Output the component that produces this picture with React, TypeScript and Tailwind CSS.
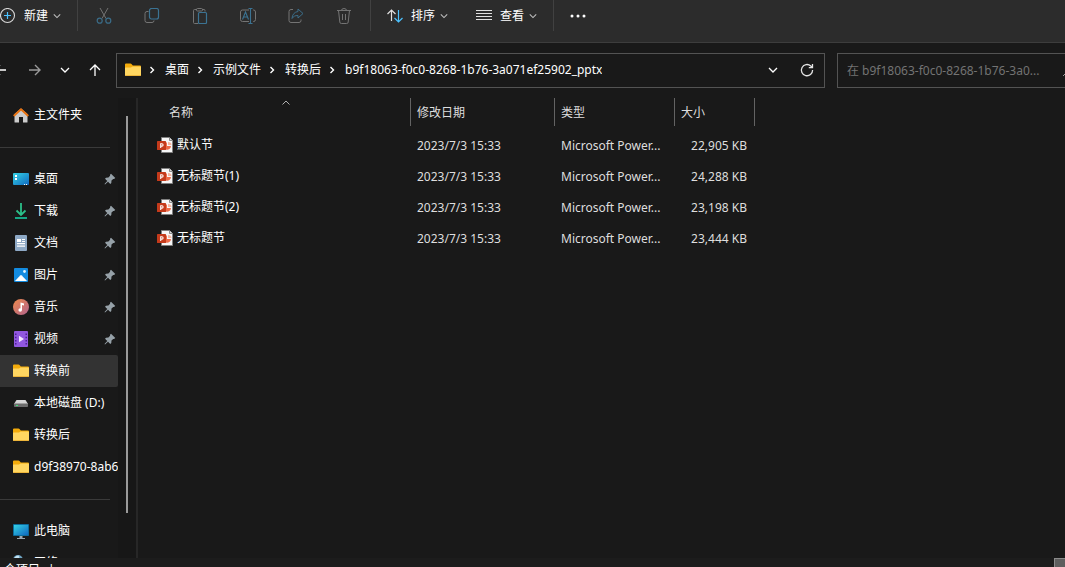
import React from "react";

type IconProps = { className?: string };

const ChevronDown = ({ className = "" }: IconProps) => (
  <svg viewBox="0 0 10 10" className={`shrink-0 ${className}`} fill="none" stroke="currentColor" strokeWidth="1.3">
    <path d="M1 3l4 4 4-4" />
  </svg>
);

const PlusCircle = () => (
  <svg viewBox="0 0 16 16" className="size-4 shrink-0" fill="none">
    <circle cx="7.5" cy="7.5" r="7" stroke="#d8d8d8" strokeWidth="1.1" />
    <path d="M7.5 4v7M4 7.5h7" stroke="#4cc2ff" strokeWidth="1.2" />
  </svg>
);

const CutIcon = () => (
  <svg viewBox="0 0 16 16" className="size-4" fill="none">
    <path d="M4 0l6 10.500M12 0L6 10.500" stroke="#747474" />
    <circle cx="3.700" cy="12.700" r="2.500" stroke="#3b6d89" strokeWidth="1.200" />
    <circle cx="12.300" cy="12.700" r="2.500" stroke="#3b6d89" strokeWidth="1.200" />
  </svg>
);

const CopyIcon = () => (
  <svg viewBox="0 0 16 16" className="size-4" fill="none">
    <path d="M4.500 3.500H3a2 2 0 0 0-2 2v7a2 2 0 0 0 2 2h5a2 2 0 0 0 2-2" stroke="#747474" />
    <rect x="5.500" y=".5" width="9" height="10.500" rx="2" stroke="#3b7393" strokeWidth="1.200" />
  </svg>
);

const PasteIcon = () => (
  <svg viewBox="0 0 16 16" className="size-4" fill="none">
    <path d="M5 1.500H2.500a1 1 0 0 0-1 1v12a1 1 0 0 0 1 1H6M10 1.500h2a1 1 0 0 1 1 1v1" stroke="#747474" />
    <rect x="4.500" y="0.500" width="6" height="2.500" rx="1" stroke="#747474" />
    <rect x="6.500" y="4.500" width="8" height="11" rx="1" stroke="#3b7393" strokeWidth="1.200" />
  </svg>
);

const RenameIcon = () => (
  <svg viewBox="0 0 16 16" className="size-4" fill="none">
    <path d="M9 2H2.500a2 2 0 0 0-2 2v7.500a2 2 0 0 0 2 2H9M13 2h.500a2 2 0 0 1 2 2v7.500a2 2 0 0 1-2 2H13" stroke="#747474" />
    <path d="M2.500 11.500l3-7.500 3 7.500M3.500 9h4M10.500 .5v15M8.500 .5h4M8.500 15.500h4" stroke="#3b7393" strokeWidth="1.100" />
  </svg>
);

const ShareIcon = () => (
  <svg viewBox="0 0 16 16" className="size-4" fill="none">
    <path d="M5 1.500H3a2 2 0 0 0-2 2v9a2 2 0 0 0 2 2h8a2 2 0 0 0 2-2v-1" stroke="#747474" />
    <path d="M10 1l5 4.500-5 4.500V7.500c-3 0-4.500.8-6 3 .2-4 2.500-6.500 6-7z" stroke="#3b6d89" />
  </svg>
);

const TrashIcon = () => (
  <svg viewBox="0 0 16 16" className="size-4" fill="none" stroke="#747474">
    <path d="M1 2.500h14M5.500 2.500a2.500 2 0 0 1 5 0M2.500 2.500l1.300 11.500a1.500 1.500 0 0 0 1.500 1.500h5.400a1.500 1.500 0 0 0 1.500-1.500l1.300-11.500M6.500 6v6M9.500 6v6" />
  </svg>
);

const SortIcon = () => (
  <svg viewBox="0 0 16 16" className="size-4" fill="none" strokeWidth="1.200">
    <path d="M4.500 13V2M.5 6l4-4 4 4" stroke="#e0e0e0" />
    <path d="M11.500 2v11.500M7.500 10l4 4 4-4" stroke="#4cc2ff" />
  </svg>
);

const ListIcon = () => (
  <svg viewBox="0 0 16 16" className="size-4" stroke="#e0e0e0">
    <path d="M0 2.500h16M0 5.500h16M0 8.500h16M0 11.500h16" />
  </svg>
);

const DotsIcon = () => (
  <svg viewBox="0 0 18 6" className="h-1.5 w-[18px]" fill="#fff">
    <circle cx="3" cy="3" r="1.500" />
    <circle cx="9" cy="3" r="1.500" />
    <circle cx="15" cy="3" r="1.500" />
  </svg>
);

const FolderIcon = () => (
  <svg viewBox="0 0 16 16" className="size-4 shrink-0">
    <path d="M0 2.500Q0 1.500 1 1.500h4.500q.6 0 1 .5l1.300 1.500H15q1 0 1 1V8H0z" fill="#f3ab0b" />
    <path d="M0 6q0-.5.500-.5H6l1.500-1H15.500q.5 0 .5.500v8q0 1-1 1H1q-1 0-1-1z" fill="#ffd661" />
    <path d="M0 13q0 1 1 1h14q1 0 1-1z" fill="#edb53a" />
  </svg>
);

const HomeIcon = () => (
  <svg viewBox="0 0 16 16" className="size-4 shrink-0">
    <path d="M1.500 7L8 1.500 14.500 7v8q0 .5-.5.500H10V10H6v5.500H2q-.5 0-.5-.5z" fill="#cbcbcb" />
    <path d="M.7 9L8 2.200 15.300 9" fill="none" stroke="#e8710f" strokeWidth="1.900" strokeLinejoin="round" />
  </svg>
);

const DesktopIcon = () => (
  <svg viewBox="0 0 16 16" className="size-4 shrink-0">
    <defs>
      <linearGradient id="desk" x1="0" y1="0" x2="1" y2="1">
        <stop offset="0" stopColor="#34d2e4" />
        <stop offset="1" stopColor="#1068c0" />
      </linearGradient>
    </defs>
    <rect y="2" width="16" height="12" rx="1" fill="url(#desk)" />
    <path d="M2 4h2v2H2zM2 7h2v2H2zM11 13h1v1h-1zM13 13h1v1h-1z" fill="#fff" />
  </svg>
);

const DownloadIcon = () => (
  <svg viewBox="0 0 16 16" className="size-4 shrink-0" fill="none" strokeWidth="1.800">
    <path d="M8 0v11M3.500 7.500L8 12l4.500-4.500" stroke="#2cc08a" />
    <path d="M2 15h12" stroke="#16a785" />
  </svg>
);

const DocumentIcon = () => (
  <svg viewBox="0 0 16 16" className="size-4 shrink-0">
    <rect x="2" width="12" height="16" rx="1" fill="#8ea9c6" />
    <path d="M4 4h4v3H4zM9 4h3v1H9zM9 6h3v1H9zM4 8h8v1.300H4zM4 10.500h8v1.300H4z" fill="#fff" />
  </svg>
);

const PictureIcon = () => (
  <svg viewBox="0 0 16 16" className="size-4 shrink-0">
    <rect x="1" y="1" width="14" height="14" rx="1" fill="#138be0" />
    <path d="M2 14l5.200-5.500q.8-.8 1.600 0L14 14z" fill="#fff" />
    <circle cx="11.500" cy="4.500" r="1.400" fill="#dff3ff" />
  </svg>
);

const MusicIcon = () => (
  <svg viewBox="0 0 16 16" className="size-4 shrink-0">
    <defs>
      <linearGradient id="music" x1="0" y1="0" x2="1" y2="1">
        <stop offset="0" stopColor="#ef8a4b" />
        <stop offset="1" stopColor="#b0628e" />
      </linearGradient>
    </defs>
    <circle cx="8" cy="8" r="8" fill="url(#music)" />
    <path d="M7.500 3.500L11 4.500v2l-2-.5v5h-1.500z" fill="#fff" />
    <circle cx="7.200" cy="11" r="1.800" fill="#fff" />
  </svg>
);

const VideoIcon = () => (
  <svg viewBox="0 0 16 16" className="size-4 shrink-0">
    <rect x="1" width="14" height="16" rx="1" fill="#9157e0" />
    <path d="M2 2.500h1.500V4H2zM2 5.700h1.500v1.500H2zM2 8.900h1.500v1.500H2zM2 12.100h1.500v1.500H2zM12.500 2.500H14V4h-1.500zM12.500 5.700H14v1.500h-1.500zM12.500 8.900H14v1.500h-1.500zM12.500 12.100H14v1.500h-1.500z" fill="#4b2195" />
    <path d="M6 4.800l5 3.200-5 3.200z" fill="#f1e6ff" />
  </svg>
);

const DriveIcon = () => (
  <svg viewBox="0 0 16 16" className="size-4 shrink-0">
    <path d="M3.500 5h9L15 9H1z" fill="#d6d6d6" />
    <rect x="1" y="8.500" width="14" height="3.500" rx=".8" fill="#6d6d6d" />
    <path d="M3 10h2v1H3z" fill="#3ee07a" />
  </svg>
);

const ComputerIcon = () => (
  <svg viewBox="0 0 16 16" className="size-4 shrink-0">
    <rect y="1" width="16" height="12" rx=".8" fill="#0c6c9c" />
    <rect x="1" y="2" width="14" height="10" fill="url(#desk)" />
    <path d="M6.500 13h3v2h-3zM4 15h8v1H4z" fill="#9aa7b0" />
  </svg>
);

const NetworkIcon = () => (
  <svg viewBox="0 0 16 16" className="size-4 shrink-0">
    <circle cx="5" cy="5" r="5" fill="#6fa5c4" />
    <path d="M1.500 2.500q2-2 4-2l1 2-3 2z" fill="#c5e4f4" />
    <rect x="5" y="7" width="11" height="7" fill="#1e8fd0" />
  </svg>
);

const PinIcon = () => (
  <svg viewBox="0 0 12 12" className="size-3 shrink-0">
    <path d="M7 .8L11.300 5 10 6l-.8-.1L7.500 7.600 7.300 10 6.300 11 4 8.700 1 11.500.5 11l2.800-3L1 5.700l1-1 2.400-.2L6.100 2.800 6 1.800z" fill="#96a1a8" />
  </svg>
);

const PowerPointIcon = () => (
  <svg viewBox="0 0 16 16" className="size-4 shrink-0">
    <path d="M4.500.5h8l3 3v12h-11z" fill="#f6f6f6" stroke="#808080" />
    <path d="M12.500.5v3h3" fill="#ddd" stroke="#707070" strokeWidth=".8" />
    <path d="M11 5v3h3.500a3.500 3 0 0 0-3.500-3z" fill="#f6b5a0" />
    <path d="M9 5.500h1V9h4A3.800 3.800 0 0 1 9 12.500z" fill="#ee6c4a" />
    <rect y="4" width="9" height="9" rx=".6" fill="#c43a1b" />
    <path d="M3.700 11V6.700h1.200a1.100 1.100 0 0 1 0 2.400H3.700" fill="none" stroke="#fff" strokeWidth="1.100" />
  </svg>
);

const fileActions = [
  { label: "剪切", icon: <CutIcon /> },
  { label: "复制", icon: <CopyIcon /> },
  { label: "粘贴", icon: <PasteIcon /> },
  { label: "重命名", icon: <RenameIcon /> },
  { label: "共享", icon: <ShareIcon /> },
  { label: "删除", icon: <TrashIcon /> },
];

const crumbs = ["桌面", "示例文件", "转换后", "b9f18063-f0c0-8268-1b76-3a071ef25902_pptx"];

type Place = { name: string; icon: React.ReactNode; pinned?: boolean; active?: boolean };

const quickAccess: Place[] = [
  { name: "桌面", icon: <DesktopIcon />, pinned: true },
  { name: "下载", icon: <DownloadIcon />, pinned: true },
  { name: "文档", icon: <DocumentIcon />, pinned: true },
  { name: "图片", icon: <PictureIcon />, pinned: true },
  { name: "音乐", icon: <MusicIcon />, pinned: true },
  { name: "视频", icon: <VideoIcon />, pinned: true },
  { name: "转换前", icon: <FolderIcon />, active: true },
  { name: "本地磁盘 (D:)", icon: <DriveIcon /> },
  { name: "转换后", icon: <FolderIcon /> },
  { name: "d9f38970-8ab6", icon: <FolderIcon /> },
];

const files = [
  { name: "默认节", date: "2023/7/3 15:33", size: "22,905 KB" },
  { name: "无标题节(1)", date: "2023/7/3 15:33", size: "24,288 KB" },
  { name: "无标题节(2)", date: "2023/7/3 15:33", size: "23,198 KB" },
  { name: "无标题节", date: "2023/7/3 15:33", size: "23,444 KB" },
];

const Toolbar = () => (
  <header className="flex h-[43px] shrink-0 border-b border-[#3d3d3d] bg-[#2c2c2c] pb-[11px]">
    <button className="flex w-[77px] items-center">
      <PlusCircle />
      <span className="ml-2">新建</span>
      <ChevronDown className="ml-[5px] size-2 text-[#c0c0c0]" />
    </button>
    <div className="mr-0.5 w-px bg-[#414141]"></div>
    {fileActions.map((action) => (
      <button key={action.label} aria-label={action.label} className="flex w-12 items-center justify-center">
        {action.icon}
      </button>
    ))}
    <div className="ml-0.5 w-px bg-[#414141]"></div>
    <button className="ml-4 flex items-center">
      <SortIcon />
      <span className="ml-2">排序</span>
      <ChevronDown className="ml-[5px] size-2 text-[#c0c0c0]" />
    </button>
    <button className="ml-7 flex items-center">
      <ListIcon />
      <span className="ml-2">查看</span>
      <ChevronDown className="ml-[5px] size-2 text-[#c0c0c0]" />
    </button>
    <div className="ml-4 w-px bg-[#414141]"></div>
    <button aria-label="查看更多" className="ml-[15px] flex items-center">
      <DotsIcon />
    </button>
  </header>
);

const AddressRow = () => (
  <div className="flex shrink-0 items-center pt-2.5 pb-2.5">
    <div className="mr-1.5 flex shrink-0 items-center pb-0.5">
      <button aria-label="后退" className="flex w-5 items-center">
        <svg viewBox="6 0 6 12" className="h-3 w-1.5" fill="none" stroke="#fff" strokeWidth="1.400">
          <path d="M6 1L1 6l5 5M1 6h11" />
        </svg>
      </button>
      <button aria-label="前进" className="flex w-[30px] items-center justify-center">
        <svg viewBox="0 0 12 12" className="size-3" fill="none" stroke="#9a9a9a" strokeWidth="1.400">
          <path d="M0 6h11M6 1l5 5-5 5" />
        </svg>
      </button>
      <button aria-label="最近浏览的位置" className="flex w-[30px] items-center justify-center">
        <ChevronDown className="size-2.5 text-white" />
      </button>
      <button aria-label="上移" className="flex w-[30px] items-center justify-center">
        <svg viewBox="0 0 12 12" className="size-3" fill="none" stroke="#fff" strokeWidth="1.300">
          <path d="M6 12V1M1 6l5-5 5 5" />
        </svg>
      </button>
    </div>

    <div className="flex h-[35px] min-w-0 flex-1 items-center border border-[#535353] pr-2.5 pb-0.5 pl-2">
      <FolderIcon />
      {crumbs.map((crumb) => (
        <React.Fragment key={crumb}>
          <svg viewBox="0 0 6 8" className="mr-2.5 ml-2 h-2 w-1.5 shrink-0" fill="none" stroke="#fff" strokeWidth="1.400">
            <path d="M1.500 1l3 3-3 3" />
          </svg>
          <a href="#" className="truncate">{crumb}</a>
        </React.Fragment>
      ))}
      <button aria-label="以前的位置" className="ml-auto">
        <ChevronDown className="size-2.5 text-white" />
      </button>
      <button aria-label="刷新" className="ml-[22px]">
        <svg viewBox="0 0 14 14" className="size-3.5" fill="none" stroke="#e4e4e4" strokeWidth="1.300">
          <path d="M12.600 7A5.600 5.600 0 1 1 10.800 3L12.400 4.500M12.500 1v3.600H8.800" />
        </svg>
      </button>
    </div>

    <div className="ml-3 flex h-[35px] w-[228px] shrink-0 items-center border border-r-0 border-[#535353] pl-[9px]">
      <input
        type="text"
        aria-label="搜索"
        placeholder="在 b9f18063-f0c0-8268-1b76-3a0..."
        className="min-w-0 flex-1 bg-transparent outline-none placeholder:text-[#737373]"
      />
      <svg viewBox="0 0 2 12" className="h-3 w-0.5 shrink-0" stroke="#9a9a9a">
        <path d="M0 11l2-2" />
      </svg>
    </div>
  </div>
);

const PlaceRow = ({ name, icon, pinned, active }: Place) => (
  <a
    href="#"
    className={`flex h-8 shrink-0 items-center overflow-hidden rounded-r-xs pl-[13px] whitespace-nowrap ${active ? "bg-[#333333]" : ""}`}
  >
    {icon}
    <span className="ml-[5px]">{name}</span>
    {pinned && (
      <span className="mr-0.5 ml-auto">
        <PinIcon />
      </span>
    )}
  </a>
);

const Divider = () => (
  <div className="mr-2 flex h-8 shrink-0 items-center">
    <hr className="w-full border-[#3a3a3a]" />
  </div>
);

const Sidebar = () => (
  <aside className="flex w-[138px] shrink-0 border-r-2 border-[#272727] bg-[#171717]">
    <nav className="flex w-[118px] flex-col overflow-hidden bg-[#191919] pt-px">
      <PlaceRow name="主文件夹" icon={<HomeIcon />} />
      <Divider />
      {quickAccess.map((place) => (
        <PlaceRow key={place.name} {...place} />
      ))}
      <Divider />
      <PlaceRow name="此电脑" icon={<ComputerIcon />} />
      <PlaceRow name="网络" icon={<NetworkIcon />} />
    </nav>
    <div className="mt-[18px] mb-[45px] ml-2 w-0.5 bg-[#9a9a9a]"></div>
  </aside>
);

const FileTable = () => (
  <main className="min-w-0 flex-1 pl-[15px]">
    <table className="w-[602px] table-fixed text-left text-[#dedede]">
      <thead>
        <tr className="h-8 align-top leading-[30px]">
          <th className="relative w-[258px] p-0 font-normal">
            <div className="h-7 border-r border-[#636363] pl-4">名称</div>
            <svg viewBox="0 0 8 5" className="absolute top-0.5 left-[129px] h-[5px] w-2" fill="none" stroke="#b0b0b0">
              <path d="M.5 4.500L4 1l3.500 3.500" />
            </svg>
          </th>
          <th className="w-36 p-0 font-normal">
            <div className="h-7 border-r border-[#636363] pl-1.5">修改日期</div>
          </th>
          <th className="w-[120px] p-0 font-normal">
            <div className="h-7 border-r border-[#636363] pl-1.5">类型</div>
          </th>
          <th className="w-20 p-0 font-normal">
            <div className="h-7 border-r border-[#636363] pl-1.5">大小</div>
          </th>
        </tr>
      </thead>
      <tbody>
        {files.map((file) => (
          <tr key={file.name} className="h-[31px]">
            <td className="p-0 pl-1 text-white">
              <div className="flex items-center gap-1 pb-px">
                <PowerPointIcon />
                {file.name}
              </div>
            </td>
            <td className="p-0 pl-1.5">{file.date}</td>
            <td className="p-0 pl-1.5 whitespace-nowrap">Microsoft Power...</td>
            <td className="p-0 pr-2 text-right">{file.size}</td>
          </tr>
        ))}
      </tbody>
    </table>
  </main>
);

const StatusBar = () => (
  <footer className="flex h-[9px] shrink-0 items-start overflow-hidden bg-[#1c1c1c] pl-1 leading-6">
    <span>个项目</span>
    <span className="ml-2">|</span>
    <button aria-label="详细信息" className="ml-auto h-5 w-[11px] border-t border-l border-[#8a8a8a] bg-[#5e5e5e] pt-[3px] pl-[3px]">
      <svg viewBox="0 0 7 7" className="size-[7px]">
        <path d="M0 0h7v7H0z" fill="#d5d5d5" />
        <path d="M2 3h5v1H2z" fill="#111" />
      </svg>
    </button>
  </footer>
);

const App: React.FC = () => {
  return (
    <div className="flex h-screen flex-col overflow-hidden bg-[#191919] font-['Noto_Sans','Noto_Sans_CJK_SC',sans-serif] text-xs text-white">
      <Toolbar />
      <AddressRow />
      <div className="flex min-h-0 flex-1">
        <Sidebar />
        <FileTable />
      </div>
      <StatusBar />
    </div>
  );
};

export default App;
